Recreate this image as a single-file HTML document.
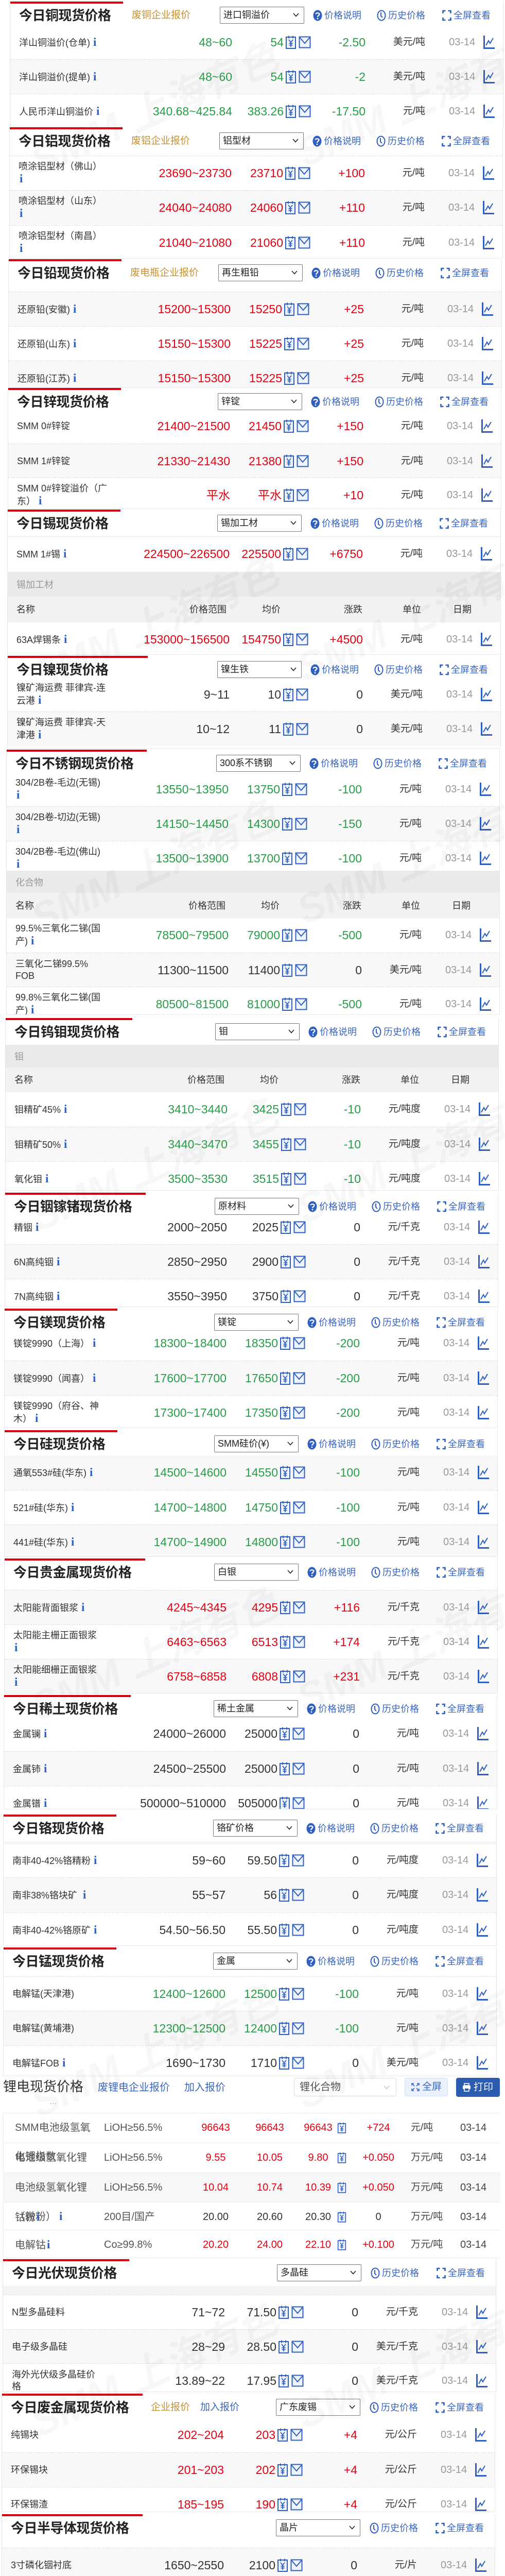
<!DOCTYPE html>
<html style="width:981px;height:5150px;overflow:hidden"><head><meta charset="utf-8">
<style>
*{box-sizing:border-box;margin:0;padding:0}
html,body{width:981px;height:5150px;overflow:hidden}
body{background:#fff;font-family:"Liberation Sans","Noto Sans CJK SC",sans-serif;color:#333}
#pg{position:relative;width:981px;height:5150px;overflow:hidden;background:#fff}
.sec{position:absolute;width:959px;background:#fff;border:1px solid #e6e6e6;border-top:none;overflow:hidden}
.bar{position:absolute;top:0;left:0;height:4px;background:#d7000f}
.tt{position:absolute;left:17px;top:9px;font-size:26px;font-weight:bold;line-height:36px;color:#222;letter-spacing:-0.5px}
.gold{position:absolute;top:9px;line-height:36px;font-size:19px;color:#c8912e}
.blk{position:absolute;top:9px;line-height:36px;font-size:19px;color:#3a66c4}
.sel{position:absolute;left:407px;top:10px;width:164px;height:33px;border:1px solid #7a7a7a;border-radius:2px;font-size:18px;line-height:31px;padding-left:6px;color:#222;background:#fff}
.sel svg{position:absolute;right:9px;top:11px}
.lk{position:absolute;top:9px;line-height:36px;font-size:18px;color:#3a66c4;display:flex;align-items:center;gap:4px;white-space:nowrap}
.r{position:absolute;left:0;right:0;height:67px}
.gy{background:#f8f8f8}
.dl{border-top:1px dashed #dcdcdc}
.r>span{position:absolute;top:0;height:66px;white-space:nowrap}
.n{left:17px;width:215px;display:flex;align-items:center;font-size:18px;line-height:23px;color:#333}
.n b,.ln b{font-family:"Liberation Serif",serif;color:#2f5fc0;font-size:23px;margin-left:6px;font-weight:bold}
.p{left:211px;width:220px;text-align:right;line-height:66px;font-size:23px;color:#333}
.a{left:411px;width:120px;text-align:right;line-height:66px;font-size:23px;color:#333}
.ic{left:534px;display:flex;align-items:center;gap:4px}
.c{left:590px;width:100px;text-align:right;line-height:66px;font-size:23px;color:#333}
.u{left:690px;width:116px;text-align:right;line-height:66px;font-size:19px;color:#333}
.d{left:852px;line-height:66px;font-size:20px;color:#999}
.ch{left:918px;display:flex;align-items:center}
.g .p,.g .a,.g .c{color:#279d48}
.rd .p,.rd .a,.rd .c{color:#e50012}
.grp{position:absolute;left:0;right:0;background:#e9eaea;color:#999;font-size:18px;padding-left:17px;display:flex;align-items:center}
.hdr{position:absolute;left:0;right:0;background:#f2f2f2;color:#333;font-size:18px;height:50px;line-height:50px}
.hdr span{position:absolute}
.strip{position:absolute;left:0;right:0;background:#f4f4f4}
.wm{position:absolute;font-size:78px;font-weight:bold;font-style:italic;color:rgba(0,0,0,0.03);transform:rotate(-24deg);white-space:nowrap;pointer-events:none;z-index:5}
.lr{position:absolute;left:0;width:965px;height:57px;border-top:1px solid #eee}
.lr span{position:absolute;top:0;height:56px;line-height:56px;white-space:nowrap;font-size:20px}
.lr .ln{left:22px;display:flex;align-items:center;font-size:18px;line-height:23px;color:#555}
.lr .sp{left:195px;font-size:20px;color:#555}
.lr .lo{left:362px;width:100px;text-align:center}
.lr .hi{left:467px;width:100px;text-align:center}
.lr .av{left:561px;width:100px;text-align:center}
.lr .yi{left:648px;display:flex;align-items:center}
.lr .cg{left:678px;width:100px;text-align:center}
.lr .un{left:791px;color:#444;font-size:19px}
.lr .dt{left:887px;color:#444}
.lred .lo,.lred .hi,.lred .av,.lred .cg{color:#e50012}
</style></head><body><div id="pg">
<svg width="0" height="0" style="position:absolute">
<defs>
<symbol id="y" viewBox="0 0 22 28"><rect x="2" y="4" width="18" height="22" fill="#eef3fc" stroke="#2f5fc0" stroke-width="2"/><path d="M7 1.5v5M15 1.5v5M7 9l4 5 4-5M11 14v9M7.5 16h7M7.5 19.5h7" stroke="#2f5fc0" stroke-width="1.8" fill="none"/></symbol>
<symbol id="e" viewBox="0 0 24 24"><rect x="1.5" y="1.5" width="21" height="21" fill="#eef3fc" stroke="#2f5fc0" stroke-width="2"/><path d="M2.5 3l9.5 11 9.5-11" stroke="#2f5fc0" stroke-width="2" fill="none"/></symbol>
<symbol id="c" viewBox="0 0 24 28"><path d="M2.5 1v24.5H23" stroke="#2f5fc0" stroke-width="3" fill="none"/><path d="M6 20l5-9 3 5 6-10" stroke="#2f5fc0" stroke-width="2" fill="none"/></symbol>
<symbol id="q" viewBox="0 0 18 22"><ellipse cx="9" cy="11" rx="8.5" ry="10.5" fill="#2f5fc0"/><path d="M5.5 8.5c0-3 7-3 7 0 0 2.5-3.5 2.5-3.5 5.5" stroke="#fff" stroke-width="2.2" fill="none"/><circle cx="9" cy="17" r="1.4" fill="#fff"/></symbol>
<symbol id="k" viewBox="0 0 18 22"><ellipse cx="9" cy="11" rx="7.5" ry="9.5" fill="none" stroke="#2f5fc0" stroke-width="2"/><path d="M8 5v7l3 3" stroke="#2f5fc0" stroke-width="2" fill="none"/></symbol>
<symbol id="f" viewBox="0 0 18 22"><path d="M1.5 7V2h5M11.5 2h5v5M16.5 15v5h-5M6.5 20h-5v-5" stroke="#2f5fc0" stroke-width="2.6" fill="none"/></symbol>
<symbol id="v" viewBox="0 0 12 8"><path d="M1 1l5 5.5 5-5.5" stroke="#222" stroke-width="1.6" fill="none"/></symbol>
</defs></svg>

<div class="sec" style="top:3px;left:19px;height:245px">
<div class="bar" style="width:219px"></div>
<div class="tt">今日铜现货价格</div><div class="gold" style="left:236px">废铜企业报价</div>
<div class="sel">进口铜溢价<svg width="12" height="8"><use href="#v"/></svg></div>
<div class="lk" style="left:588px"><svg width="18" height="22"><use href="#q"/></svg>价格说明</div>
<div class="lk" style="left:712px"><svg width="18" height="22"><use href="#k"/></svg>历史价格</div>
<div class="lk" style="left:839px"><svg width="18" height="22"><use href="#f"/></svg>全屏查看</div>
<div class="r g" style="top:46px"><span class="n"><span>洋山铜溢价(仓单)<b>i</b></span></span><span class="p">48~60</span><span class="a">54</span><span class="ic"><svg width="22" height="28"><use href="#y"/></svg><svg width="24" height="24"><use href="#e"/></svg></span><span class="c">-2.50</span><span class="u">美元/吨</span><span class="d">03-14</span><span class="ch"><svg width="24" height="28"><use href="#c"/></svg></span></div>
<div class="r g gy dl" style="top:112px"><span class="n"><span>洋山铜溢价(提单)<b>i</b></span></span><span class="p">48~60</span><span class="a">54</span><span class="ic"><svg width="22" height="28"><use href="#y"/></svg><svg width="24" height="24"><use href="#e"/></svg></span><span class="c">-2</span><span class="u">美元/吨</span><span class="d">03-14</span><span class="ch"><svg width="24" height="28"><use href="#c"/></svg></span></div>
<div class="r g dl" style="top:179px"><span class="n"><span>人民币洋山铜溢价<b>i</b></span></span><span class="p">340.68~425.84</span><span class="a">383.26</span><span class="ic"><svg width="22" height="28"><use href="#y"/></svg><svg width="24" height="24"><use href="#e"/></svg></span><span class="c">-17.50</span><span class="u">元/吨</span><span class="d">03-14</span><span class="ch"><svg width="24" height="28"><use href="#c"/></svg></span></div>
</div>

<div class="sec" style="top:247px;left:18px;height:255px">
<div class="bar" style="width:219px"></div>
<div class="tt">今日铝现货价格</div><div class="gold" style="left:236px">废铝企业报价</div>
<div class="sel">铝型材<svg width="12" height="8"><use href="#v"/></svg></div>
<div class="lk" style="left:588px"><svg width="18" height="22"><use href="#q"/></svg>价格说明</div>
<div class="lk" style="left:712px"><svg width="18" height="22"><use href="#k"/></svg>历史价格</div>
<div class="lk" style="left:839px"><svg width="18" height="22"><use href="#f"/></svg>全屏查看</div>
<div class="r rd dl" style="top:55px"><span class="n"><span>喷涂铝型材（佛山）<br><b style="margin-left:2px">i</b></span></span><span class="p">23690~23730</span><span class="a">23710</span><span class="ic"><svg width="22" height="28"><use href="#y"/></svg><svg width="24" height="24"><use href="#e"/></svg></span><span class="c">+100</span><span class="u">元/吨</span><span class="d">03-14</span><span class="ch"><svg width="24" height="28"><use href="#c"/></svg></span></div>
<div class="r rd gy dl" style="top:122px"><span class="n"><span>喷涂铝型材（山东）<br><b style="margin-left:2px">i</b></span></span><span class="p">24040~24080</span><span class="a">24060</span><span class="ic"><svg width="22" height="28"><use href="#y"/></svg><svg width="24" height="24"><use href="#e"/></svg></span><span class="c">+110</span><span class="u">元/吨</span><span class="d">03-14</span><span class="ch"><svg width="24" height="28"><use href="#c"/></svg></span></div>
<div class="r rd dl" style="top:190px"><span class="n"><span>喷涂铝型材（南昌）<br><b style="margin-left:2px">i</b></span></span><span class="p">21040~21080</span><span class="a">21060</span><span class="ic"><svg width="22" height="28"><use href="#y"/></svg><svg width="24" height="24"><use href="#e"/></svg></span><span class="c">+110</span><span class="u">元/吨</span><span class="d">03-14</span><span class="ch"><svg width="24" height="28"><use href="#c"/></svg></span></div>
</div>

<div class="sec" style="top:503px;left:16px;height:250px">
<div class="bar" style="width:219px"></div>
<div class="tt">今日铅现货价格</div><div class="gold" style="left:236px">废电瓶企业报价</div>
<div class="sel">再生粗铅<svg width="12" height="8"><use href="#v"/></svg></div>
<div class="lk" style="left:588px"><svg width="18" height="22"><use href="#q"/></svg>价格说明</div>
<div class="lk" style="left:712px"><svg width="18" height="22"><use href="#k"/></svg>历史价格</div>
<div class="lk" style="left:839px"><svg width="18" height="22"><use href="#f"/></svg>全屏查看</div>
<div class="r rd gy dl" style="top:63px"><span class="n"><span>还原铅(安徽)<b>i</b></span></span><span class="p">15200~15300</span><span class="a">15250</span><span class="ic"><svg width="22" height="28"><use href="#y"/></svg><svg width="24" height="24"><use href="#e"/></svg></span><span class="c">+25</span><span class="u">元/吨</span><span class="d">03-14</span><span class="ch"><svg width="24" height="28"><use href="#c"/></svg></span></div>
<div class="r rd dl" style="top:130px"><span class="n"><span>还原铅(山东)<b>i</b></span></span><span class="p">15150~15300</span><span class="a">15225</span><span class="ic"><svg width="22" height="28"><use href="#y"/></svg><svg width="24" height="24"><use href="#e"/></svg></span><span class="c">+25</span><span class="u">元/吨</span><span class="d">03-14</span><span class="ch"><svg width="24" height="28"><use href="#c"/></svg></span></div>
<div class="r rd gy dl" style="top:197px"><span class="n"><span>还原铅(江苏)<b>i</b></span></span><span class="p">15150~15300</span><span class="a">15225</span><span class="ic"><svg width="22" height="28"><use href="#y"/></svg><svg width="24" height="24"><use href="#e"/></svg></span><span class="c">+25</span><span class="u">元/吨</span><span class="d">03-14</span><span class="ch"><svg width="24" height="28"><use href="#c"/></svg></span></div>
</div>

<div class="sec" style="top:753px;left:15px;height:235px">
<div class="bar" style="width:219px"></div>
<div class="tt">今日锌现货价格</div>
<div class="sel">锌锭<svg width="12" height="8"><use href="#v"/></svg></div>
<div class="lk" style="left:588px"><svg width="18" height="22"><use href="#q"/></svg>价格说明</div>
<div class="lk" style="left:712px"><svg width="18" height="22"><use href="#k"/></svg>历史价格</div>
<div class="lk" style="left:839px"><svg width="18" height="22"><use href="#f"/></svg>全屏查看</div>
<div class="r rd" style="top:41px"><span class="n"><span>SMM 0#锌锭</span></span><span class="p">21400~21500</span><span class="a">21450</span><span class="ic"><svg width="22" height="28"><use href="#y"/></svg><svg width="24" height="24"><use href="#e"/></svg></span><span class="c">+150</span><span class="u">元/吨</span><span class="d">03-14</span><span class="ch"><svg width="24" height="28"><use href="#c"/></svg></span></div>
<div class="r rd gy dl" style="top:108px"><span class="n"><span>SMM 1#锌锭</span></span><span class="p">21330~21430</span><span class="a">21380</span><span class="ic"><svg width="22" height="28"><use href="#y"/></svg><svg width="24" height="24"><use href="#e"/></svg></span><span class="c">+150</span><span class="u">元/吨</span><span class="d">03-14</span><span class="ch"><svg width="24" height="28"><use href="#c"/></svg></span></div>
<div class="r rd dl" style="top:174px"><span class="n"><span>SMM 0#锌锭溢价（广<br>东）<b>i</b></span></span><span class="p">平水</span><span class="a">平水</span><span class="ic"><svg width="22" height="28"><use href="#y"/></svg><svg width="24" height="24"><use href="#e"/></svg></span><span class="c">+10</span><span class="u">元/吨</span><span class="d">03-14</span><span class="ch"><svg width="24" height="28"><use href="#c"/></svg></span></div>
</div>

<div class="sec" style="top:989px;left:14px;height:282px">
<div class="bar" style="width:219px"></div>
<div class="tt">今日锡现货价格</div>
<div class="sel">锡加工材<svg width="12" height="8"><use href="#v"/></svg></div>
<div class="lk" style="left:588px"><svg width="18" height="22"><use href="#q"/></svg>价格说明</div>
<div class="lk" style="left:712px"><svg width="18" height="22"><use href="#k"/></svg>历史价格</div>
<div class="lk" style="left:839px"><svg width="18" height="22"><use href="#f"/></svg>全屏查看</div>
<div class="strip" style="top:51px;height:3px"></div>
<div class="r rd" style="top:53px"><span class="n"><span>SMM 1#锡<b>i</b></span></span><span class="p">224500~226500</span><span class="a">225500</span><span class="ic"><svg width="22" height="28"><use href="#y"/></svg><svg width="24" height="24"><use href="#e"/></svg></span><span class="c">+6750</span><span class="u">元/吨</span><span class="d">03-14</span><span class="ch"><svg width="24" height="28"><use href="#c"/></svg></span></div>
<div class="grp" style="top:121px;height:48px">锡加工材</div>
<div class="hdr" style="top:169px"><span style="left:17px">名称</span><span style="left:353px">价格范围</span><span style="left:494px">均价</span><span style="left:653px">涨跌</span><span style="left:767px">单位</span><span style="left:865px">日期</span></div>
<div class="r rd" style="top:219px"><span class="n"><span>63A焊锡条<b>i</b></span></span><span class="p">153000~156500</span><span class="a">154750</span><span class="ic"><svg width="22" height="28"><use href="#y"/></svg><svg width="24" height="24"><use href="#e"/></svg></span><span class="c">+4500</span><span class="u">元/吨</span><span class="d">03-14</span><span class="ch"><svg width="24" height="28"><use href="#c"/></svg></span></div>
</div>

<div class="sec" style="top:1273px;left:14px;height:180px">
<div class="bar" style="width:272px"></div>
<div class="tt">今日镍现货价格</div>
<div class="sel">镍生铁<svg width="12" height="8"><use href="#v"/></svg></div>
<div class="lk" style="left:588px"><svg width="18" height="22"><use href="#q"/></svg>价格说明</div>
<div class="lk" style="left:712px"><svg width="18" height="22"><use href="#k"/></svg>历史价格</div>
<div class="lk" style="left:839px"><svg width="18" height="22"><use href="#f"/></svg>全屏查看</div>
<div class="r" style="top:42px"><span class="n"><span>镍矿海运费 菲律宾-连<br>云港<b>i</b></span></span><span class="p">9~11</span><span class="a">10</span><span class="ic"><svg width="22" height="28"><use href="#y"/></svg><svg width="24" height="24"><use href="#e"/></svg></span><span class="c">0</span><span class="u">美元/吨</span><span class="d">03-14</span><span class="ch"><svg width="24" height="28"><use href="#c"/></svg></span></div>
<div class="r gy dl" style="top:108px"><span class="n"><span>镍矿海运费 菲律宾-天<br>津港<b>i</b></span></span><span class="p">10~12</span><span class="a">11</span><span class="ic"><svg width="22" height="28"><use href="#y"/></svg><svg width="24" height="24"><use href="#e"/></svg></span><span class="c">0</span><span class="u">美元/吨</span><span class="d">03-14</span><span class="ch"><svg width="24" height="28"><use href="#c"/></svg></span></div>
</div>

<div class="sec" style="top:1455px;left:12px;height:515px">
<div class="bar" style="width:272px"></div>
<div class="tt">今日不锈钢现货价格</div>
<div class="sel">300系不锈钢<svg width="12" height="8"><use href="#v"/></svg></div>
<div class="lk" style="left:588px"><svg width="18" height="22"><use href="#q"/></svg>价格说明</div>
<div class="lk" style="left:712px"><svg width="18" height="22"><use href="#k"/></svg>历史价格</div>
<div class="lk" style="left:839px"><svg width="18" height="22"><use href="#f"/></svg>全屏查看</div>
<div class="r g" style="top:44px"><span class="n"><span>304/2B卷-毛边(无锡)<br><b style="margin-left:2px">i</b></span></span><span class="p">13550~13950</span><span class="a">13750</span><span class="ic"><svg width="22" height="28"><use href="#y"/></svg><svg width="24" height="24"><use href="#e"/></svg></span><span class="c">-100</span><span class="u">元/吨</span><span class="d">03-14</span><span class="ch"><svg width="24" height="28"><use href="#c"/></svg></span></div>
<div class="r g gy dl" style="top:110px"><span class="n"><span>304/2B卷-切边(无锡)<br><b style="margin-left:2px">i</b></span></span><span class="p">14150~14450</span><span class="a">14300</span><span class="ic"><svg width="22" height="28"><use href="#y"/></svg><svg width="24" height="24"><use href="#e"/></svg></span><span class="c">-150</span><span class="u">元/吨</span><span class="d">03-14</span><span class="ch"><svg width="24" height="28"><use href="#c"/></svg></span></div>
<div class="r g dl" style="top:177px"><span class="n"><span>304/2B卷-毛边(佛山)<br><b style="margin-left:2px">i</b></span></span><span class="p">13500~13900</span><span class="a">13700</span><span class="ic"><svg width="22" height="28"><use href="#y"/></svg><svg width="24" height="24"><use href="#e"/></svg></span><span class="c">-100</span><span class="u">元/吨</span><span class="d">03-14</span><span class="ch"><svg width="24" height="28"><use href="#c"/></svg></span></div>
<div class="grp" style="top:235px;height:43px">化合物</div>
<div class="hdr" style="top:278px"><span style="left:17px">名称</span><span style="left:353px">价格范围</span><span style="left:494px">均价</span><span style="left:653px">涨跌</span><span style="left:767px">单位</span><span style="left:865px">日期</span></div>
<div class="r g" style="top:327px"><span class="n"><span>99.5%三氧化二锑(国<br>产)<b>i</b></span></span><span class="p">78500~79500</span><span class="a">79000</span><span class="ic"><svg width="22" height="28"><use href="#y"/></svg><svg width="24" height="24"><use href="#e"/></svg></span><span class="c">-500</span><span class="u">元/吨</span><span class="d">03-14</span><span class="ch"><svg width="24" height="28"><use href="#c"/></svg></span></div>
<div class="r gy dl" style="top:394px"><span class="n"><span>三氧化二锑99.5%<br>FOB</span></span><span class="p">11300~11500</span><span class="a">11400</span><span class="ic"><svg width="22" height="28"><use href="#y"/></svg><svg width="24" height="24"><use href="#e"/></svg></span><span class="c">0</span><span class="u">美元/吨</span><span class="d">03-14</span><span class="ch"><svg width="24" height="28"><use href="#c"/></svg></span></div>
<div class="r g dl" style="top:460px"><span class="n"><span>99.8%三氧化二锑(国<br>产)<b>i</b></span></span><span class="p">80500~81500</span><span class="a">81000</span><span class="ic"><svg width="22" height="28"><use href="#y"/></svg><svg width="24" height="24"><use href="#e"/></svg></span><span class="c">-500</span><span class="u">元/吨</span><span class="d">03-14</span><span class="ch"><svg width="24" height="28"><use href="#c"/></svg></span></div>
</div>

<div class="sec" style="top:1976px;left:10px;height:335px">
<div class="bar" style="width:246px"></div>
<div class="tt">今日钨钼现货价格</div>
<div class="sel">钼<svg width="12" height="8"><use href="#v"/></svg></div>
<div class="lk" style="left:588px"><svg width="18" height="22"><use href="#q"/></svg>价格说明</div>
<div class="lk" style="left:712px"><svg width="18" height="22"><use href="#k"/></svg>历史价格</div>
<div class="lk" style="left:839px"><svg width="18" height="22"><use href="#f"/></svg>全屏查看</div>
<div class="grp" style="top:52px;height:44px">钼</div>
<div class="hdr" style="top:96px;height:48px;line-height:48px"><span style="left:17px">名称</span><span style="left:353px">价格范围</span><span style="left:494px">均价</span><span style="left:653px">涨跌</span><span style="left:767px">单位</span><span style="left:865px">日期</span></div>
<div class="r g" style="top:144px"><span class="n"><span>钼精矿45%<b>i</b></span></span><span class="p">3410~3440</span><span class="a">3425</span><span class="ic"><svg width="22" height="28"><use href="#y"/></svg><svg width="24" height="24"><use href="#e"/></svg></span><span class="c">-10</span><span class="u">元/吨度</span><span class="d">03-14</span><span class="ch"><svg width="24" height="28"><use href="#c"/></svg></span></div>
<div class="r g gy dl" style="top:211px"><span class="n"><span>钼精矿50%<b>i</b></span></span><span class="p">3440~3470</span><span class="a">3455</span><span class="ic"><svg width="22" height="28"><use href="#y"/></svg><svg width="24" height="24"><use href="#e"/></svg></span><span class="c">-10</span><span class="u">元/吨度</span><span class="d">03-14</span><span class="ch"><svg width="24" height="28"><use href="#c"/></svg></span></div>
<div class="r g dl" style="top:278px"><span class="n"><span>氧化钼<b>i</b></span></span><span class="p">3500~3530</span><span class="a">3515</span><span class="ic"><svg width="22" height="28"><use href="#y"/></svg><svg width="24" height="24"><use href="#e"/></svg></span><span class="c">-10</span><span class="u">元/吨度</span><span class="d">03-14</span><span class="ch"><svg width="24" height="28"><use href="#c"/></svg></span></div>
</div>

<div class="sec" style="top:2315px;left:9px;height:222px">
<div class="bar" style="width:273px"></div>
<div class="tt">今日铟镓锗现货价格</div>
<div class="sel">原材料<svg width="12" height="8"><use href="#v"/></svg></div>
<div class="lk" style="left:588px"><svg width="18" height="22"><use href="#q"/></svg>价格说明</div>
<div class="lk" style="left:712px"><svg width="18" height="22"><use href="#k"/></svg>历史价格</div>
<div class="lk" style="left:839px"><svg width="18" height="22"><use href="#f"/></svg>全屏查看</div>
<div class="r" style="top:34px"><span class="n"><span>精铟<b>i</b></span></span><span class="p">2000~2050</span><span class="a">2025</span><span class="ic"><svg width="22" height="28"><use href="#y"/></svg><svg width="24" height="24"><use href="#e"/></svg></span><span class="c">0</span><span class="u">元/千克</span><span class="d">03-14</span><span class="ch"><svg width="24" height="28"><use href="#c"/></svg></span></div>
<div class="r gy dl" style="top:100px"><span class="n"><span>6N高纯铟<b>i</b></span></span><span class="p">2850~2950</span><span class="a">2900</span><span class="ic"><svg width="22" height="28"><use href="#y"/></svg><svg width="24" height="24"><use href="#e"/></svg></span><span class="c">0</span><span class="u">元/千克</span><span class="d">03-14</span><span class="ch"><svg width="24" height="28"><use href="#c"/></svg></span></div>
<div class="r dl" style="top:167px"><span class="n"><span>7N高纯铟<b>i</b></span></span><span class="p">3550~3950</span><span class="a">3750</span><span class="ic"><svg width="22" height="28"><use href="#y"/></svg><svg width="24" height="24"><use href="#e"/></svg></span><span class="c">0</span><span class="u">元/千克</span><span class="d">03-14</span><span class="ch"><svg width="24" height="28"><use href="#c"/></svg></span></div>
</div>

<div class="sec" style="top:2540px;left:8px;height:232px">
<div class="bar" style="width:219px"></div>
<div class="tt">今日镁现货价格</div>
<div class="sel">镁锭<svg width="12" height="8"><use href="#v"/></svg></div>
<div class="lk" style="left:588px"><svg width="18" height="22"><use href="#q"/></svg>价格说明</div>
<div class="lk" style="left:712px"><svg width="18" height="22"><use href="#k"/></svg>历史价格</div>
<div class="lk" style="left:839px"><svg width="18" height="22"><use href="#f"/></svg>全屏查看</div>
<div class="r g" style="top:34px"><span class="n"><span>镁锭9990（上海）<b>i</b></span></span><span class="p">18300~18400</span><span class="a">18350</span><span class="ic"><svg width="22" height="28"><use href="#y"/></svg><svg width="24" height="24"><use href="#e"/></svg></span><span class="c">-200</span><span class="u">元/吨</span><span class="d">03-14</span><span class="ch"><svg width="24" height="28"><use href="#c"/></svg></span></div>
<div class="r g gy dl" style="top:101px"><span class="n"><span>镁锭9990（闻喜）<b>i</b></span></span><span class="p">17600~17700</span><span class="a">17650</span><span class="ic"><svg width="22" height="28"><use href="#y"/></svg><svg width="24" height="24"><use href="#e"/></svg></span><span class="c">-200</span><span class="u">元/吨</span><span class="d">03-14</span><span class="ch"><svg width="24" height="28"><use href="#c"/></svg></span></div>
<div class="r g dl" style="top:168px"><span class="n"><span>镁锭9990（府谷、神<br>木）<b>i</b></span></span><span class="p">17300~17400</span><span class="a">17350</span><span class="ic"><svg width="22" height="28"><use href="#y"/></svg><svg width="24" height="24"><use href="#e"/></svg></span><span class="c">-200</span><span class="u">元/吨</span><span class="d">03-14</span><span class="ch"><svg width="24" height="28"><use href="#c"/></svg></span></div>
</div>

<div class="sec" style="top:2776px;left:8px;height:246px">
<div class="bar" style="width:219px"></div>
<div class="tt">今日硅现货价格</div>
<div class="sel">SMM硅价(¥)<svg width="12" height="8"><use href="#v"/></svg></div>
<div class="lk" style="left:588px"><svg width="18" height="22"><use href="#q"/></svg>价格说明</div>
<div class="lk" style="left:712px"><svg width="18" height="22"><use href="#k"/></svg>历史价格</div>
<div class="lk" style="left:839px"><svg width="18" height="22"><use href="#f"/></svg>全屏查看</div>
<div class="r g gy" style="top:49px"><span class="n"><span>通氧553#硅(华东)<b>i</b></span></span><span class="p">14500~14600</span><span class="a">14550</span><span class="ic"><svg width="22" height="28"><use href="#y"/></svg><svg width="24" height="24"><use href="#e"/></svg></span><span class="c">-100</span><span class="u">元/吨</span><span class="d">03-14</span><span class="ch"><svg width="24" height="28"><use href="#c"/></svg></span></div>
<div class="r g dl" style="top:116px"><span class="n"><span>521#硅(华东)<b>i</b></span></span><span class="p">14700~14800</span><span class="a">14750</span><span class="ic"><svg width="22" height="28"><use href="#y"/></svg><svg width="24" height="24"><use href="#e"/></svg></span><span class="c">-100</span><span class="u">元/吨</span><span class="d">03-14</span><span class="ch"><svg width="24" height="28"><use href="#c"/></svg></span></div>
<div class="r g gy dl" style="top:183px"><span class="n"><span>441#硅(华东)<b>i</b></span></span><span class="p">14700~14900</span><span class="a">14800</span><span class="ic"><svg width="22" height="28"><use href="#y"/></svg><svg width="24" height="24"><use href="#e"/></svg></span><span class="c">-100</span><span class="u">元/吨</span><span class="d">03-14</span><span class="ch"><svg width="24" height="28"><use href="#c"/></svg></span></div>
</div>

<div class="sec" style="top:3025px;left:8px;height:262px">
<div class="bar" style="width:273px"></div>
<div class="tt">今日贵金属现货价格</div>
<div class="sel">白银<svg width="12" height="8"><use href="#v"/></svg></div>
<div class="lk" style="left:588px"><svg width="18" height="22"><use href="#q"/></svg>价格说明</div>
<div class="lk" style="left:712px"><svg width="18" height="22"><use href="#k"/></svg>历史价格</div>
<div class="lk" style="left:839px"><svg width="18" height="22"><use href="#f"/></svg>全屏查看</div>
<div class="r rd gy dl" style="top:61px"><span class="n"><span>太阳能背面银浆<b>i</b></span></span><span class="p">4245~4345</span><span class="a">4295</span><span class="ic"><svg width="22" height="28"><use href="#y"/></svg><svg width="24" height="24"><use href="#e"/></svg></span><span class="c">+116</span><span class="u">元/千克</span><span class="d">03-14</span><span class="ch"><svg width="24" height="28"><use href="#c"/></svg></span></div>
<div class="r rd dl" style="top:128px"><span class="n"><span>太阳能主栅正面银浆<br><b style="margin-left:2px">i</b></span></span><span class="p">6463~6563</span><span class="a">6513</span><span class="ic"><svg width="22" height="28"><use href="#y"/></svg><svg width="24" height="24"><use href="#e"/></svg></span><span class="c">+174</span><span class="u">元/千克</span><span class="d">03-14</span><span class="ch"><svg width="24" height="28"><use href="#c"/></svg></span></div>
<div class="r rd gy dl" style="top:195px"><span class="n"><span>太阳能细栅正面银浆<br><b style="margin-left:2px">i</b></span></span><span class="p">6758~6858</span><span class="a">6808</span><span class="ic"><svg width="22" height="28"><use href="#y"/></svg><svg width="24" height="24"><use href="#e"/></svg></span><span class="c">+231</span><span class="u">元/千克</span><span class="d">03-14</span><span class="ch"><svg width="24" height="28"><use href="#c"/></svg></span></div>
</div>

<div class="sec" style="top:3290px;left:7px;height:222px">
<div class="bar" style="width:246px"></div>
<div class="tt">今日稀土现货价格</div>
<div class="sel">稀土金属<svg width="12" height="8"><use href="#v"/></svg></div>
<div class="lk" style="left:588px"><svg width="18" height="22"><use href="#q"/></svg>价格说明</div>
<div class="lk" style="left:712px"><svg width="18" height="22"><use href="#k"/></svg>历史价格</div>
<div class="lk" style="left:839px"><svg width="18" height="22"><use href="#f"/></svg>全屏查看</div>
<div class="r" style="top:42px"><span class="n"><span>金属镧<b>i</b></span></span><span class="p">24000~26000</span><span class="a">25000</span><span class="ic"><svg width="22" height="28"><use href="#y"/></svg><svg width="24" height="24"><use href="#e"/></svg></span><span class="c">0</span><span class="u">元/吨</span><span class="d">03-14</span><span class="ch"><svg width="24" height="28"><use href="#c"/></svg></span></div>
<div class="r gy dl" style="top:109px"><span class="n"><span>金属铈<b>i</b></span></span><span class="p">24500~25500</span><span class="a">25000</span><span class="ic"><svg width="22" height="28"><use href="#y"/></svg><svg width="24" height="24"><use href="#e"/></svg></span><span class="c">0</span><span class="u">元/吨</span><span class="d">03-14</span><span class="ch"><svg width="24" height="28"><use href="#c"/></svg></span></div>
<div class="r dl" style="top:176px"><span class="n"><span>金属镨<b>i</b></span></span><span class="p">500000~510000</span><span class="a">505000</span><span class="ic"><svg width="22" height="28"><use href="#y"/></svg><svg width="24" height="24"><use href="#e"/></svg></span><span class="c">0</span><span class="u">元/吨</span><span class="d">03-14</span><span class="ch"><svg width="24" height="28"><use href="#c"/></svg></span></div>
</div>

<div class="sec" style="top:3522px;left:6px;height:255px">
<div class="bar" style="width:219px"></div>
<div class="tt">今日铬现货价格</div>
<div class="sel">铬矿价格<svg width="12" height="8"><use href="#v"/></svg></div>
<div class="lk" style="left:588px"><svg width="18" height="22"><use href="#q"/></svg>价格说明</div>
<div class="lk" style="left:712px"><svg width="18" height="22"><use href="#k"/></svg>历史价格</div>
<div class="lk" style="left:839px"><svg width="18" height="22"><use href="#f"/></svg>全屏查看</div>
<div class="strip" style="top:52px;height:6px"></div>
<div class="r" style="top:56px"><span class="n"><span>南非40-42%铬精粉<b>i</b></span></span><span class="p">59~60</span><span class="a">59.50</span><span class="ic"><svg width="22" height="28"><use href="#y"/></svg><svg width="24" height="24"><use href="#e"/></svg></span><span class="c">0</span><span class="u">元/吨度</span><span class="d">03-14</span><span class="ch"><svg width="24" height="28"><use href="#c"/></svg></span></div>
<div class="r gy dl" style="top:122px"><span class="n"><span>南非38%铬块矿 <b>i</b></span></span><span class="p">55~57</span><span class="a">56</span><span class="ic"><svg width="22" height="28"><use href="#y"/></svg><svg width="24" height="24"><use href="#e"/></svg></span><span class="c">0</span><span class="u">元/吨度</span><span class="d">03-14</span><span class="ch"><svg width="24" height="28"><use href="#c"/></svg></span></div>
<div class="r dl" style="top:190px"><span class="n"><span>南非40-42%铬原矿<b>i</b></span></span><span class="p">54.50~56.50</span><span class="a">55.50</span><span class="ic"><svg width="22" height="28"><use href="#y"/></svg><svg width="24" height="24"><use href="#e"/></svg></span><span class="c">0</span><span class="u">元/吨度</span><span class="d">03-14</span><span class="ch"><svg width="24" height="28"><use href="#c"/></svg></span></div>
</div>

<div class="sec" style="top:3780px;left:6px;height:250px">
<div class="bar" style="width:219px"></div>
<div class="tt">今日锰现货价格</div>
<div class="sel">金属<svg width="12" height="8"><use href="#v"/></svg></div>
<div class="lk" style="left:588px"><svg width="18" height="22"><use href="#q"/></svg>价格说明</div>
<div class="lk" style="left:712px"><svg width="18" height="22"><use href="#k"/></svg>历史价格</div>
<div class="lk" style="left:839px"><svg width="18" height="22"><use href="#f"/></svg>全屏查看</div>
<div class="r g dl" style="top:56px"><span class="n"><span>电解锰(天津港)</span></span><span class="p">12400~12600</span><span class="a">12500</span><span class="ic"><svg width="22" height="28"><use href="#y"/></svg><svg width="24" height="24"><use href="#e"/></svg></span><span class="c">-100</span><span class="u">元/吨</span><span class="d">03-14</span><span class="ch"><svg width="24" height="28"><use href="#c"/></svg></span></div>
<div class="r g gy dl" style="top:123px"><span class="n"><span>电解锰(黄埔港)</span></span><span class="p">12300~12500</span><span class="a">12400</span><span class="ic"><svg width="22" height="28"><use href="#y"/></svg><svg width="24" height="24"><use href="#e"/></svg></span><span class="c">-100</span><span class="u">元/吨</span><span class="d">03-14</span><span class="ch"><svg width="24" height="28"><use href="#c"/></svg></span></div>
<div class="r dl" style="top:190px"><span class="n"><span>电解锰FOB<b>i</b></span></span><span class="p">1690~1730</span><span class="a">1710</span><span class="ic"><svg width="22" height="28"><use href="#y"/></svg><svg width="24" height="24"><use href="#e"/></svg></span><span class="c">0</span><span class="u">美元/吨</span><span class="d">03-14</span><span class="ch"><svg width="24" height="28"><use href="#c"/></svg></span></div>
</div>

<div style="position:absolute;top:4031px;left:6px;font-size:26px;line-height:38px;color:#333">锂电现货价格</div>
<div style="position:absolute;top:4035px;left:190px;font-size:20px;line-height:34px;color:#3a66c4">废锂电企业报价</div>
<div style="position:absolute;top:4035px;left:358px;font-size:20px;line-height:34px;color:#3a66c4">加入报价</div>
<div style="position:absolute;top:4033px;left:571px;width:199px;height:36px;border:1px solid #dcdcdc;border-radius:4px;font-size:20px;line-height:34px;padding-left:10px;color:#555">锂化合物<svg style="position:absolute;right:12px;top:13px" width="12" height="9" viewBox="0 0 12 8"><path d="M1 1l5 6 5-6" stroke="#bbb" stroke-width="1.3" fill="none"/></svg></div>
<div style="position:absolute;top:4033px;left:786px;width:84px;height:36px;border:1px solid #d6e3f7;background:#eaf1fc;border-radius:4px;font-size:19px;line-height:34px;color:#3a66c4;padding-left:12px;display:flex;align-items:center;gap:5px"><svg width="16" height="16" viewBox="0 0 16 16"><path d="M1 5V1h4M11 1h4v4M15 11v4h-4M5 15H1v-4M2 2l4 4M14 2l-4 4M14 14l-4-4M2 14l4-4" stroke="#3a66c4" stroke-width="1.6" fill="none"/></svg>全屏</div>
<div style="position:absolute;top:4033px;left:886px;width:85px;height:37px;background:#2c5cb0;border-radius:4px;font-size:19px;line-height:37px;color:#fff;padding-left:12px;display:flex;align-items:center;gap:5px"><svg width="17" height="17" viewBox="0 0 17 17"><rect x="4" y="1" width="9" height="4" fill="none" stroke="#fff" stroke-width="1.6"/><rect x="1" y="5" width="15" height="7" rx="1.5" fill="#fff"/><rect x="4" y="10" width="9" height="6" fill="#2c5cb0" stroke="#fff" stroke-width="1.6"/></svg>打印</div>
<div style="position:absolute;top:4074px;left:96px;font-size:14px;color:#999">···</div>
<div style="position:absolute;top:4101px;left:6px;width:966px;height:282px;border-left:1px solid #eee;border-bottom:1px solid #eee;overflow:hidden">
<div class="lr lred" style="top:0"><span class="ln"><span>SMM电池级氢氧<br>化锂指数</span></span><span class="sp">LiOH≥56.5%</span><span class="lo">96643</span><span class="hi">96643</span><span class="av">96643</span><span class="yi"><svg width="18" height="24"><use href="#y"/></svg></span><span class="cg">+724</span><span class="un">元/吨</span><span class="dt">03-14</span></div>
<div class="lr lred" style="top:58px"><span class="ln"><span>电池级氢氧化锂<br>（粗颗粒）<b>i</b></span></span><span class="sp">LiOH≥56.5%</span><span class="lo">9.55</span><span class="hi">10.05</span><span class="av">9.80</span><span class="yi"><svg width="18" height="24"><use href="#y"/></svg></span><span class="cg">+0.050</span><span class="un">万元/吨</span><span class="dt">03-14</span></div>
<div class="lr lred" style="top:116px;background:#f7f7f7"><span class="ln"><span>电池级氢氧化锂<br>（微粉）<b>i</b></span></span><span class="sp">LiOH≥56.5%</span><span class="lo">10.04</span><span class="hi">10.74</span><span class="av">10.39</span><span class="yi"><svg width="18" height="24"><use href="#y"/></svg></span><span class="cg">+0.050</span><span class="un">万元/吨</span><span class="dt">03-14</span></div>
<div class="lr" style="top:173px"><span class="ln"><span>钴粉<b style="margin-left:2px">i</b></span></span><span class="sp">200目/国产</span><span class="lo">20.00</span><span class="hi">20.60</span><span class="av">20.30</span><span class="yi"><svg width="18" height="24"><use href="#y"/></svg></span><span class="cg">0</span><span class="un">万元/吨</span><span class="dt">03-14</span></div>
<div class="lr lred" style="top:227px"><span class="ln"><span>电解钴<b style="margin-left:2px">i</b></span></span><span class="sp">Co≥99.8%</span><span class="lo">20.20</span><span class="hi">24.00</span><span class="av">22.10</span><span class="yi"><svg width="18" height="24"><use href="#y"/></svg></span><span class="cg">+0.100</span><span class="un">万元/吨</span><span class="dt">03-14</span></div>
</div>

<div class="sec" style="top:4385px;left:5px;height:258px">
<div class="bar" style="width:245px"></div>
<div class="tt">今日光伏现货价格</div>
<div class="sel" style="left:532px">多晶硅<svg width="12" height="8"><use href="#v"/></svg></div>
<div class="lk" style="left:714px"><svg width="18" height="22"><use href="#k"/></svg>历史价格</div>
<div class="lk" style="left:842px"><svg width="18" height="22"><use href="#f"/></svg>全屏查看</div>
<div class="strip" style="top:52px;height:18px"></div>
<div class="r dl" style="top:69px"><span class="n"><span>N型多晶硅料</span></span><span class="p">71~72</span><span class="a">71.50</span><span class="ic"><svg width="22" height="28"><use href="#y"/></svg><svg width="24" height="24"><use href="#e"/></svg></span><span class="c">0</span><span class="u">元/千克</span><span class="d">03-14</span><span class="ch"><svg width="24" height="28"><use href="#c"/></svg></span></div>
<div class="r gy dl" style="top:136px"><span class="n"><span>电子级多晶硅</span></span><span class="p">28~29</span><span class="a">28.50</span><span class="ic"><svg width="22" height="28"><use href="#y"/></svg><svg width="24" height="24"><use href="#e"/></svg></span><span class="c">0</span><span class="u">美元/千克</span><span class="d">03-14</span><span class="ch"><svg width="24" height="28"><use href="#c"/></svg></span></div>
<div class="r dl" style="top:202px"><span class="n"><span>海外光伏级多晶硅价<br>格</span></span><span class="p">13.89~22</span><span class="a">17.95</span><span class="ic"><svg width="22" height="28"><use href="#y"/></svg><svg width="24" height="24"><use href="#e"/></svg></span><span class="c">0</span><span class="u">美元/千克</span><span class="d">03-14</span><span class="ch"><svg width="24" height="28"><use href="#c"/></svg></span></div>
</div>

<div class="sec" style="top:4646px;left:3px;height:230px">
<div class="bar" style="width:273px"></div>
<div class="tt">今日废金属现货价格</div><div class="gold" style="left:289px">企业报价</div><div class="blk" style="left:385px">加入报价</div>
<div class="sel" style="left:532px">广东废锡<svg width="12" height="8"><use href="#v"/></svg></div>
<div class="lk" style="left:714px"><svg width="18" height="22"><use href="#k"/></svg>历史价格</div>
<div class="lk" style="left:842px"><svg width="18" height="22"><use href="#f"/></svg>全屏查看</div>
<div class="r rd" style="top:47px"><span class="n"><span>纯锡块</span></span><span class="p">202~204</span><span class="a">203</span><span class="ic"><svg width="22" height="28"><use href="#y"/></svg><svg width="24" height="24"><use href="#e"/></svg></span><span class="c">+4</span><span class="u">元/公斤</span><span class="d">03-14</span><span class="ch"><svg width="24" height="28"><use href="#c"/></svg></span></div>
<div class="r rd gy dl" style="top:114px"><span class="n"><span>环保锡块</span></span><span class="p">201~203</span><span class="a">202</span><span class="ic"><svg width="22" height="28"><use href="#y"/></svg><svg width="24" height="24"><use href="#e"/></svg></span><span class="c">+4</span><span class="u">元/公斤</span><span class="d">03-14</span><span class="ch"><svg width="24" height="28"><use href="#c"/></svg></span></div>
<div class="r rd dl" style="top:181px"><span class="n"><span>环保锡渣</span></span><span class="p">185~195</span><span class="a">190</span><span class="ic"><svg width="22" height="28"><use href="#y"/></svg><svg width="24" height="24"><use href="#e"/></svg></span><span class="c">+4</span><span class="u">元/公斤</span><span class="d">03-14</span><span class="ch"><svg width="24" height="28"><use href="#c"/></svg></span></div>
</div>

<div class="sec" style="top:4880px;left:3px;height:268px">
<div class="bar" style="width:273px"></div>
<div class="tt">今日半导体现货价格</div>
<div class="sel" style="left:532px">晶片<svg width="12" height="8"><use href="#v"/></svg></div>
<div class="lk" style="left:714px"><svg width="18" height="22"><use href="#k"/></svg>历史价格</div>
<div class="lk" style="left:842px"><svg width="18" height="22"><use href="#f"/></svg>全屏查看</div>
<div class="r gy dl" style="top:65px"><span class="n"><span>3寸磷化铟衬底</span></span><span class="p">1650~2550</span><span class="a">2100</span><span class="ic"><svg width="22" height="28"><use href="#y"/></svg><svg width="24" height="24"><use href="#e"/></svg></span><span class="c">0</span><span class="u">元/片</span><span class="d">03-14</span><span class="ch"><svg width="24" height="28"><use href="#c"/></svg></span></div>
<div class="r dl" style="top:132px"><span class="n"><span>4寸磷化铟衬底</span></span><span class="p">3850~5050</span><span class="a">4450</span><span class="ic"><svg width="22" height="28"><use href="#y"/></svg><svg width="24" height="24"><use href="#e"/></svg></span><span class="c">0</span><span class="u">元/片</span><span class="d">03-14</span><span class="ch"><svg width="24" height="28"><use href="#c"/></svg></span></div>
<div class="r gy dl" style="top:199px;height:66px"><span class="n"><span>2寸砷化铟衬底</span></span><span class="p">2450~2550</span><span class="a">2500</span><span class="ic"><svg width="22" height="28"><use href="#y"/></svg><svg width="24" height="24"><use href="#e"/></svg></span><span class="c">0</span><span class="u">元/片</span><span class="d">03-14</span><span class="ch"><svg width="24" height="28"><use href="#c"/></svg></span></div>
</div>

<div class="wm" style="top:150px;left:40px">SMM 上海有色</div>
<div class="wm" style="top:150px;left:560px">SMM 上海有</div>
<div class="wm" style="top:1150px;left:40px">SMM 上海有色</div>
<div class="wm" style="top:1150px;left:560px">SMM 上海有</div>
<div class="wm" style="top:1620px;left:40px">SMM 上海有色</div>
<div class="wm" style="top:1620px;left:560px">SMM 上海有</div>
<div class="wm" style="top:2200px;left:40px">SMM 上海有色</div>
<div class="wm" style="top:2200px;left:560px">SMM 上海有</div>
<div class="wm" style="top:3150px;left:40px">SMM 上海有色</div>
<div class="wm" style="top:3150px;left:560px">SMM 上海有</div>
<div class="wm" style="top:3920px;left:40px">SMM 上海有色</div>
<div class="wm" style="top:3920px;left:560px">SMM 上海有</div>
<div class="wm" style="top:4540px;left:40px">SMM 上海有色</div>
<div class="wm" style="top:4540px;left:560px">SMM 上海有</div>
</div></body></html>
